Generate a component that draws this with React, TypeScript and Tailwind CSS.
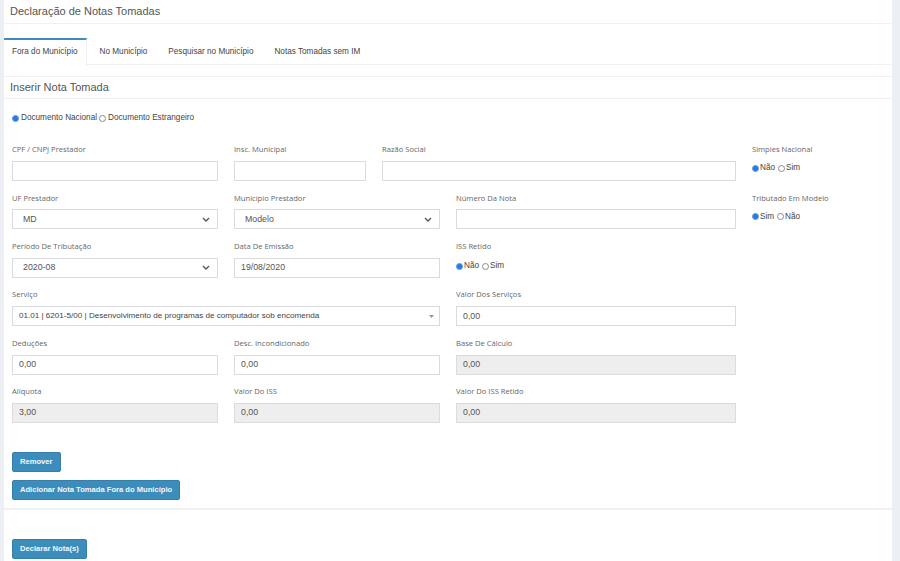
import React from "react";

const arial = { fontFamily: '"Liberation Sans", Arial, sans-serif' };
const label = { fontFamily: '"Open Sans", "Noto Sans", sans-serif' };

function Radio({ checked }: { checked?: boolean }) {
    return checked ? (
        <span className="inline-block h-[7px] w-[7px] shrink-0 rounded-full border border-[#5b9bec] bg-[#2a7ae4]" />
    ) : (
        <span className="inline-block h-[7px] w-[7px] shrink-0 rounded-full border border-[#8a8a8a] bg-white" />
    );
}

function Label({ children }: { children: React.ReactNode }) {
    return (
        <div className="mb-[6px] flex h-[10px] items-center text-[7.6px] text-[#666]" style={label}>
            {children}
        </div>
    );
}

function Input({ value, disabled }: { value?: string; disabled?: boolean }) {
    return (
        <div
            className={`flex h-[20px] items-center border px-[6px] text-[8.8px] text-[#555] ${
                disabled ? "border-[#dcdcdc] bg-[#eeeeee]" : "border-[#d9dbe0] bg-white"
            }`}
            style={arial}
        >
            {value}
        </div>
    );
}

function Select({ value }: { value: string }) {
    return (
        <div
            className="flex h-[20px] items-center justify-between border border-[#d9dbe0] bg-white pl-[10px] pr-[7px] text-[8.8px] text-[#555]"
            style={arial}
        >
            <span>{value}</span>
            <svg width="8" height="5" viewBox="0 0 8 5">
                <path d="M1 1 L4 4 L7 1" fill="none" stroke="#555" strokeWidth="1.4" />
            </svg>
        </div>
    );
}

function RadioPair({ a, b }: { a: string; b: string }) {
    return (
        <div className="flex h-[15px] items-center text-[8.2px] text-[#444]" style={arial}>
            <Radio checked />
            <span className="ml-[1px] mr-[3px]">{a}</span>
            <Radio />
            <span className="ml-[1px]">{b}</span>
        </div>
    );
}

function Field({ title, span, children }: { title: string; span: string; children: React.ReactNode }) {
    return (
        <div className={`${span} px-[8px]`}>
            <Label>{title}</Label>
            {children}
        </div>
    );
}

function Button({ children }: { children: React.ReactNode }) {
    return (
        <button
            className="flex h-[20px] items-center rounded-[2px] border border-[#367fa9] bg-[#3c8dbc] px-[7px] text-[7.6px] font-bold text-[#f4f8fb]"
            style={arial}
        >
            {children}
        </button>
    );
}

const tabs = ["Fora do Município", "No Município", "Pesquisar no Município", "Notas Tomadas sem IM"];

export default function App() {
    return (
        <div className="flex h-[561px] w-[900px] overflow-hidden bg-[#ecf0f5]">
            <div className="w-[4px] shrink-0" />
            <main className="w-[888px] shrink-0 bg-white">
                <header className="flex h-[24px] items-center border-b border-[#f0f0f0] pl-[6px] text-[11px] text-[#555]" style={arial}>
                    Declaração de Notas Tomadas
                </header>

                <nav className="mt-[14px] flex h-[27px] border-b border-[#f0f0f0] text-[8.2px] text-[#444]" style={arial}>
                    {tabs.map((t, i) => (
                        <div
                            key={t}
                            className={`mr-[5px] flex h-[27px] items-center border-t-2 px-[8px] pb-[1px] ${
                                i === 0 ? "border-r border-t-[#3c8dbc] border-r-[#f0f0f0] bg-white" : "border-t-transparent"
                            }`}
                        >
                            {t}
                        </div>
                    ))}
                </nav>

                <section className="mt-[11px] border-t border-[#f0f0f0]">
                    <div className="flex h-[22px] items-center border-b border-[#f0f0f0] pl-[6px] text-[11px] text-[#555]" style={arial}>
                        Inserir Nota Tomada
                    </div>

                    <div className="mt-[13px] flex h-[12px] items-center pl-[8px] text-[8.2px] text-[#444]" style={arial}>
                        <Radio checked />
                        <span className="ml-[2px] mr-[2px]">Documento Nacional</span>
                        <Radio />
                        <span className="ml-[2px]">Documento Estrangeiro</span>
                    </div>

                    <div className="mt-[21px] grid grid-cols-12 gap-y-[12.4px]">
                        <Field title="CPF / CNPJ Prestador" span="col-span-3">
                            <Input />
                        </Field>
                        <Field title="Insc. Municipal" span="col-span-2">
                            <Input />
                        </Field>
                        <Field title="Razão Social" span="col-span-5">
                            <Input />
                        </Field>
                        <Field title="Simples Nacional" span="col-span-2">
                            <RadioPair a="Não" b="Sim" />
                        </Field>

                        <Field title="UF Prestador" span="col-span-3">
                            <Select value="MD" />
                        </Field>
                        <Field title="Município Prestador" span="col-span-3">
                            <Select value="Modelo" />
                        </Field>
                        <Field title="Número Da Nota" span="col-span-4">
                            <Input />
                        </Field>
                        <Field title="Tributado Em Modelo" span="col-span-2">
                            <RadioPair a="Sim" b="Não" />
                        </Field>

                        <Field title="Período De Tributação" span="col-span-3">
                            <Select value="2020-08" />
                        </Field>
                        <Field title="Data De Emissão" span="col-span-3">
                            <Input value="19/08/2020" />
                        </Field>
                        <Field title="ISS Retido" span="col-span-6">
                            <div className="pt-[1px]">
                                <RadioPair a="Não" b="Sim" />
                            </div>
                        </Field>

                        <Field title="Serviço" span="col-span-6">
                            <div
                                className="flex h-[20px] items-center justify-between border border-[#d9dbe0] bg-white pl-[6px] pr-[5px] text-[8.1px] text-[#444]"
                                style={arial}
                            >
                                <span>01.01 | 6201-5/00 | Desenvolvimento de programas de computador sob encomenda</span>
                                <svg width="5" height="3" viewBox="0 0 5 3">
                                    <path d="M0 0 L5 0 L2.5 3 Z" fill="#999" />
                                </svg>
                            </div>
                        </Field>
                        <Field title="Valor Dos Serviços" span="col-span-4">
                            <Input value="0,00" />
                        </Field>
                        <div className="col-span-2" />

                        <Field title="Deduções" span="col-span-3">
                            <Input value="0,00" />
                        </Field>
                        <Field title="Desc. Incondicionado" span="col-span-3">
                            <Input value="0,00" />
                        </Field>
                        <Field title="Base De Cálculo" span="col-span-4">
                            <Input value="0,00" disabled />
                        </Field>
                        <div className="col-span-2" />

                        <Field title="Alíquota" span="col-span-3">
                            <Input value="3,00" disabled />
                        </Field>
                        <Field title="Valor Do ISS" span="col-span-3">
                            <Input value="0,00" disabled />
                        </Field>
                        <Field title="Valor Do ISS Retido" span="col-span-4">
                            <Input value="0,00" disabled />
                        </Field>
                    </div>

                    <div className="mt-[29px] flex flex-col items-start gap-[8px] pl-[8px]">
                        <Button>Remover</Button>
                        <Button>Adicionar Nota Tomada Fora do Município</Button>
                    </div>
                </section>

                <div className="mt-[8px] h-[2px] bg-[#f0f0f0]" />

                <div className="mt-[29px] pl-[8px]">
                    <Button>Declarar Nota(s)</Button>
                </div>
            </main>
            <div className="flex-1" />
        </div>
    );
}
